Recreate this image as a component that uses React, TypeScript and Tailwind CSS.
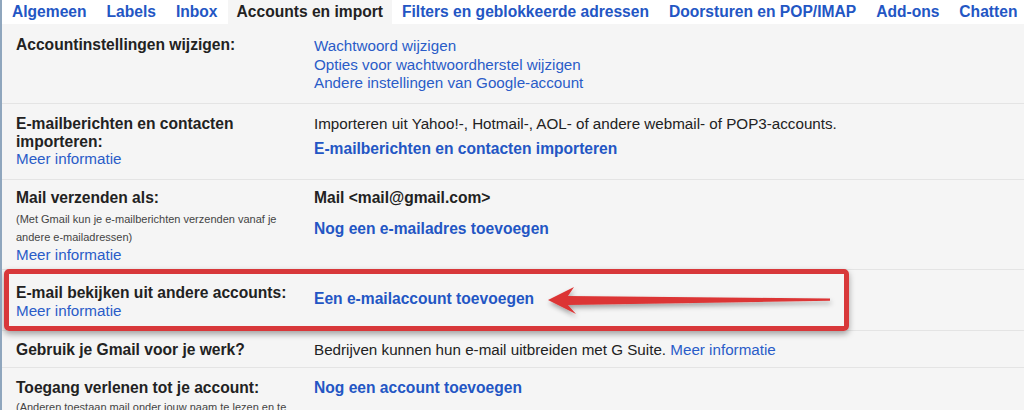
import React from "react";

const tabs = [
  "Algemeen",
  "Labels",
  "Inbox",
  "Accounts en import",
  "Filters en geblokkeerde adressen",
  "Doorsturen en POP/IMAP",
  "Add-ons",
  "Chatten",
];

export default function App() {
  return (
    <div
      className="relative w-[1024px] h-[410px] overflow-hidden bg-[#f5f5f5] border-l-2 border-[#8fa6bd] text-[#222]"
      style={{ fontFamily: '"Liberation Sans", Arial, Helvetica, sans-serif' }}
    >
      {/* Tabs */}
      <div className="flex h-[24px] bg-white">
        {tabs.map((t) => {
          const active = t === "Accounts en import";
          return (
            <div
              key={t}
              className={
                active
                  ? "px-[9px] h-full flex items-center bg-[#f5f5f5] text-[#222] text-[15.6px] font-bold whitespace-nowrap"
                  : "px-[10px] h-full flex items-center text-[#2356c4] text-[15.6px] font-bold whitespace-nowrap"
              }
            >
              {t}
            </div>
          );
        })}
      </div>

      {/* Row 1 */}
      <div className="flex h-[80px] border-b border-[#e4e4e4]">
        <div className="w-[312px] shrink-0 pl-[14px] pt-[12px] text-[15.6px] font-bold leading-[18px]">
          Accountinstellingen wijzigen:
        </div>
        <div className="flex flex-col pt-[13px] text-[15.2px] leading-[18.5px] text-[#2a5cc8]">
          <span>Wachtwoord wijzigen</span>
          <span>Opties voor wachtwoordherstel wijzigen</span>
          <span>Andere instellingen van Google-account</span>
        </div>
      </div>

      {/* Row 2 */}
      <div className="flex h-[76px] border-b border-[#e4e4e4]">
        <div className="w-[312px] shrink-0 pl-[14px] pt-[11px] leading-[17.5px]">
          <div className="font-bold text-[15.6px]">
            E-mailberichten en contacten
            <br />
            importeren:
          </div>
          <div className="text-[15.2px] text-[#2a5cc8]">Meer informatie</div>
        </div>
        <div className="flex flex-col pt-[11px] leading-[17.5px]">
          <span className="text-[15.2px]">
            Importeren uit Yahoo!-, Hotmail-, AOL- of andere webmail- of POP3-accounts.
          </span>
          <span className="mt-[7.5px] text-[15.6px] font-bold text-[#2356c4]">
            E-mailberichten en contacten importeren
          </span>
        </div>
      </div>

      {/* Row 3 */}
      <div className="flex h-[90px] border-b border-[#e4e4e4]">
        <div className="w-[312px] shrink-0 pl-[14px] pt-[9px]">
          <div className="font-bold text-[15.6px] leading-[18px]">Mail verzenden als:</div>
          <div className="mt-[3px] text-[11px] leading-[18px] text-[#444]">
            (Met Gmail kun je e-mailberichten verzenden vanaf je
            <br />
            andere e-mailadressen)
          </div>
          <div className="text-[15.2px] leading-[17.5px] text-[#2a5cc8]">Meer informatie</div>
        </div>
        <div className="flex flex-col pt-[9px] text-[15.6px] leading-[18px] font-bold">
          <span>Mail &lt;mail@gmail.com&gt;</span>
          <span className="mt-[13px] text-[#2356c4]">Nog een e-mailadres toevoegen</span>
        </div>
      </div>

      {/* Row 4 */}
      <div className="flex h-[61px] border-b border-[#e4e4e4]">
        <div className="w-[312px] shrink-0 pl-[14px] pt-[14px] leading-[18px]">
          <div className="font-bold text-[15.6px]">E-mail bekijken uit andere accounts:</div>
          <div className="text-[15.2px] text-[#2a5cc8]">Meer informatie</div>
        </div>
        <div className="pt-[20px] text-[15.6px] leading-[18px] font-bold text-[#2356c4]">
          Een e-mailaccount toevoegen
        </div>
      </div>

      {/* Row 5 */}
      <div className="flex h-[37px] border-b border-[#e4e4e4]">
        <div className="w-[312px] shrink-0 pl-[14px] pt-[10px] text-[15.6px] leading-[18px] font-bold">
          Gebruik je Gmail voor je werk?
        </div>
        <div className="pt-[10px] text-[15.2px] leading-[18px]">
          Bedrijven kunnen hun e-mail uitbreiden met G Suite.{" "}
          <span className="text-[#2a5cc8]">Meer informatie</span>
        </div>
      </div>

      {/* Row 6 */}
      <div className="flex">
        <div className="w-[312px] shrink-0 pl-[14px] pt-[11px]">
          <div className="font-bold text-[15.6px] leading-[18px]">Toegang verlenen tot je account:</div>
          <div className="mt-[1px] text-[11px] leading-[18px] text-[#444] whitespace-nowrap">
            (Anderen toestaan mail onder jouw naam te lezen en te
          </div>
        </div>
        <div className="pt-[11px] text-[15.6px] leading-[18px] font-bold text-[#2356c4]">
          Nog een account toevoegen
        </div>
      </div>

      {/* Highlight annotation */}
      <div className="absolute left-[2px] top-[269px] w-[845px] h-[62px] border-[5px] border-[#d8383a] rounded-[5px] shadow-[0_3px_6px_rgba(0,0,0,0.35)] pointer-events-none" />
      <svg
        className="absolute left-0 top-0 pointer-events-none"
        width="1024"
        height="410"
        viewBox="0 0 1024 410"
      >
        <defs>
          <filter id="sh" x="-10%" y="-50%" width="120%" height="200%">
            <feDropShadow dx="1" dy="3" stdDeviation="2.5" floodColor="#000" floodOpacity="0.35" />
          </filter>
        </defs>
        <path
          d="M546,300 L572,287 L566,296 L828,298.5 L828,300.8 L566,305 L574,314 Z"
          fill="#dc3535"
          filter="url(#sh)"
        />
      </svg>
    </div>
  );
}
